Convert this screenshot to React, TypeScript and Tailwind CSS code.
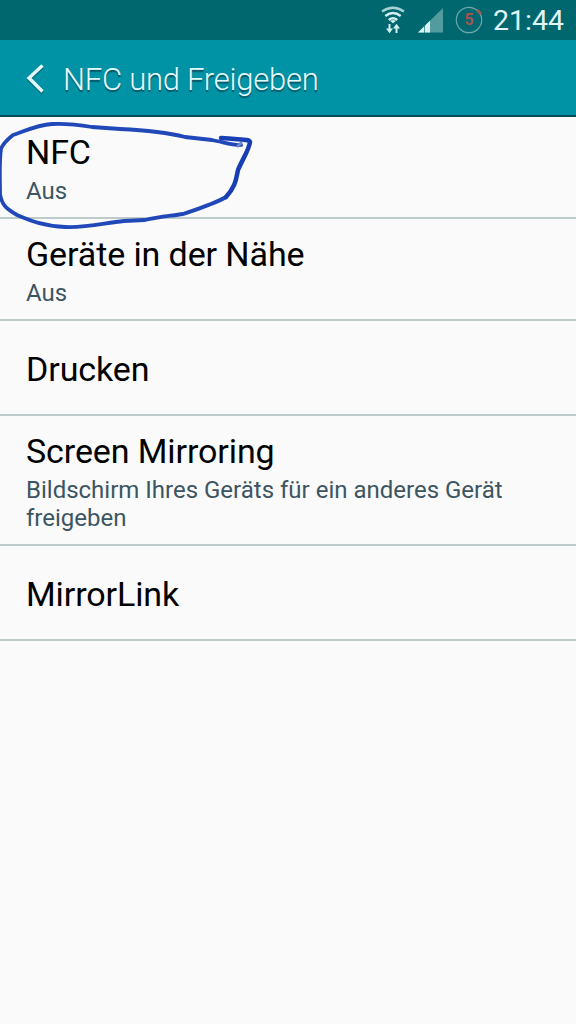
const items = [
  { title: "NFC", text: "Aus", height: "h-[102px]" },
  { title: "Geräte in der Nähe", text: "Aus", height: "h-[102px]" },
  { title: "Drucken", height: "h-[95px]" },
  { title: "Screen Mirroring", text: "Bildschirm Ihres Geräts für ein anderes Gerät freigeben", height: "h-[130px]" },
  { title: "MirrorLink", height: "h-[95px]" },
];

function StatusBar() {
  return (
    <div className="h-10 shrink-0 bg-[#00676f] flex items-center justify-end pr-[11px] text-[#e0f5f7]">
      <svg width="24" height="28" viewBox="0 0 24 28" fill="none" strokeWidth="2.4" className="mr-[13px]">
        <path d="M1 5.5Q12 -2 23 5.5" stroke="#a5d3d5" />
        <path d="M4.3 10Q12 3.8 19.7 10" stroke="#d2eff0" />
        <path d="M7.8 14Q12 10.4 16.2 14" stroke="#d2eff0" />
        <path d="M12 17.2L9.2 14.9Q12 12.9 14.8 14.9Z" fill="#d2eff0" />
        <path d="M8.5 18V24M15.5 27V21" stroke="#d2eff0" strokeWidth="2" />
        <path d="M5 22.5H12L8.5 27.3ZM12 22.5H19L15.5 17.7Z" fill="#d2eff0" />
      </svg>
      <svg width="25" height="26" viewBox="0 0 25 26" className="mr-[12px]">
        <path d="M0 25.5L25 1V25.5Z" fill="#529b9e" />
        <path d="M0 25.5L6 19.6V25.5ZM7 25.5V18.6L12 13.7V25.5Z" fill="#d9f3f3" />
      </svg>
      <div className="relative w-7 h-7 mr-[10px] flex items-center justify-center">
        <svg width="28" height="28" viewBox="0 0 28 28" fill="none" className="absolute inset-0">
          <circle cx="14" cy="14" r="12.7" stroke="#68a9aa" strokeWidth="1.2" />
          <path d="M22 4L26 8" stroke="#a35d55" strokeWidth="2.6" />
        </svg>
        <span className="relative text-[16px] leading-none font-bold text-[#a8544f]">5</span>
      </div>
      <span className="text-[28.5px] leading-10 w-[72px] whitespace-nowrap mt-px">21:44</span>
    </div>
  );
}

function Header() {
  return (
    <div className="h-[77px] shrink-0 bg-[#0092a5] border-b-2 border-[#064b58] flex items-center pl-[26px] text-[#e5fafc]">
      <svg width="18" height="30" viewBox="0 0 18 30" fill="none" strokeWidth="3.4" className="mr-[19px] mt-[3px]">
        <path d="M16.5 3L3 15.5L16.5 29" stroke="#086574" />
        <path d="M16.5 1.5L3 14L16.5 27.5" stroke="#e5fafc" />
      </svg>
      <h1 className="text-[31px] leading-10 font-light tracking-[-0.25px] mt-1 [text-shadow:0_2px_1px_#075564]">NFC und Freigeben</h1>
    </div>
  );
}

function App() {
  return (
    <div className="relative w-[576px] h-[1024px] overflow-hidden flex flex-col bg-[#fafafa] font-[Roboto,sans-serif]">
      <StatusBar />
      <Header />
      <ul>
        {items.map((item) => (
          <li key={item.title} className={`${item.height} border-b-2 border-[#bdcbcb] px-[26px] pt-[3px] flex flex-col justify-center`}>
            <h2 className="text-[34px] leading-10 tracking-[-0.1px] text-black whitespace-nowrap">{item.title}</h2>
            {item.text && <p className="mt-[5px] text-[24px] leading-7 text-[#3c5562]">{item.text}</p>}
          </li>
        ))}
      </ul>
      {/* pen stroke around the first entry */}
      <svg width="270" height="120" viewBox="0 0 270 120" fill="none" strokeLinecap="round" strokeLinejoin="round" className="absolute left-0 top-[110px]">
        <path d="M241 35C235 36 223 32 212 30L185 27C165 22 140 20 120 19L92 17C80 15 68 13 52 14C37 15 25 21 13 25C8 29 3 33 1 39C-1 53 0 66 0 84C2 96 7 99 17 105C31 111 44 116 65 117C87 118 104 113 124 111L145 110C158 107 170 106 183 104C201 98 214 94 226 87" stroke="#2148b8" strokeWidth="3.8" />
        <path d="M238 36L241 33" stroke="#6e88ca" strokeWidth="3" />
        <path d="M226 87C236 76 236 69 238 60C243 48 249 40 250 32C249 29 245 30 221 28" stroke="#173eb2" strokeWidth="4.5" />
      </svg>
    </div>
  );
}

export default App;
